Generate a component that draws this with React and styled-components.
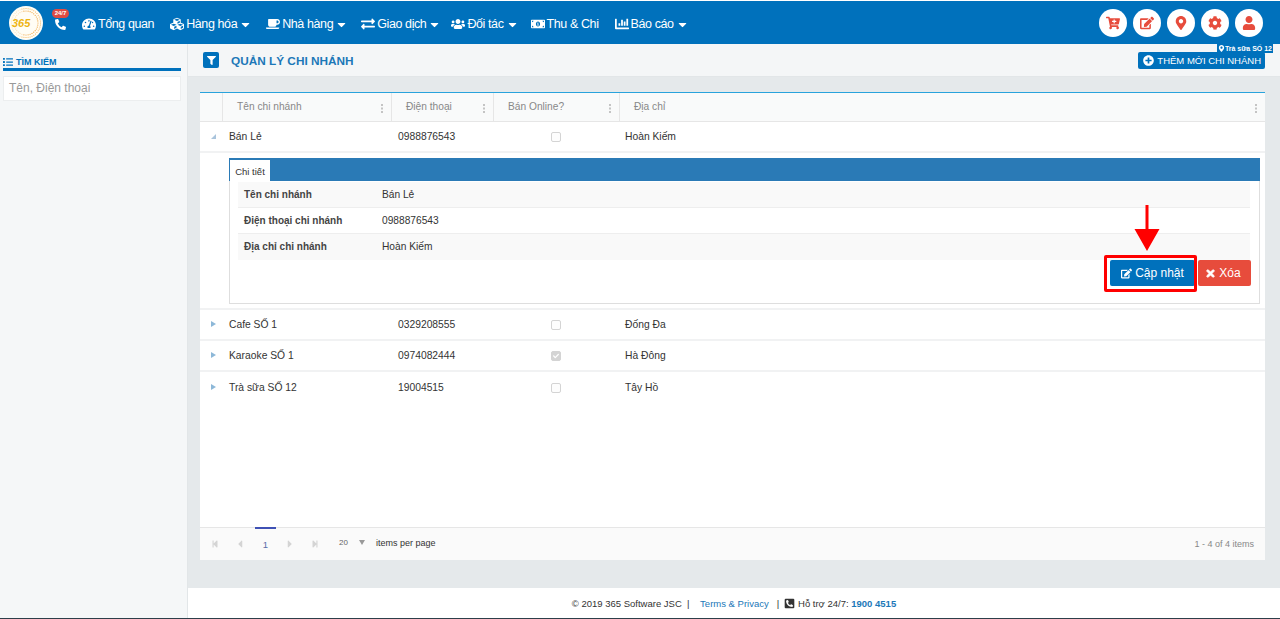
import React from 'react';
import styled, { createGlobalStyle } from 'styled-components';
import {
  FaTachometerAlt, FaCubes, FaCoffee, FaExchangeAlt, FaUsers, FaMoneyBillAlt, FaChartBar,
  FaCaretDown, FaCaretLeft, FaCaretRight, FaStepBackward, FaStepForward, FaPhoneAlt, FaList,
  FaFilter, FaCartPlus, FaEdit, FaMapMarkerAlt, FaCog, FaUser, FaPlusCircle, FaTimes,
  FaPhoneSquareAlt, FaCheck,
} from 'react-icons/fa';

const GlobalStyle = createGlobalStyle`
  html, body { margin: 0; padding: 0; height: 100%; overflow: hidden; }
  body { font-family: "Liberation Sans", Arial, sans-serif; font-size: 11px; color: #333; background: #fff; }
  * { box-sizing: border-box; }
`;

const Page = styled.div`
  width: 1280px;
  height: 619px;
  display: flex;
  flex-direction: column;
  overflow: hidden;
  position: relative;
  border-top: 1px solid #fff;
  border-bottom: 1px solid #2d3f4a;
`;

const Header = styled.header`
  height: 43px;
  flex: none;
  background: #0071bc;
  display: flex;
  align-items: center;
  padding: 0 17px 0 9px;
  position: relative;
`;

const Logo = styled.svg`
  width: 34px;
  height: 34px;
  flex: none;
`;

const PhoneBox = styled.div`
  position: relative;
  width: 32px;
  height: 34px;
  flex: none;
  color: #fff;
  font-size: 11px;
  padding: 13px 0 0 12px;
`;

const Badge = styled.span`
  position: absolute;
  top: 3px;
  left: 9px;
  height: 9px;
  width: 17px;
  border-radius: 5px;
  background: #e04b42;
  color: #fff;
  font-size: 6px;
  line-height: 9px;
  text-align: center;
  font-weight: bold;
`;

const Nav = styled.nav`
  display: flex;
  align-items: center;
  flex: 1;
  padding-top: 3px;
`;

const NavItem = styled.a`
  display: flex;
  align-items: center;
  color: #fff;
  font-size: 12.5px;
  letter-spacing: -0.4px;
  white-space: nowrap;
  margin-left: ${p => p.$gap}px;
  svg { font-size: 14px; margin-right: 2px; }
  svg.caret { font-size: 13px; margin: 0 0 0 2px; }
`;

const RoundIcons = styled.div`
  display: flex;
  gap: 6px;
`;

const RoundIcon = styled.span`
  width: 28px;
  height: 28px;
  border-radius: 50%;
  background: #fff;
  color: #e74c3c;
  font-size: 14px;
  display: flex;
  align-items: center;
  justify-content: center;
`;

const BranchTag = styled.span`
  position: absolute;
  top: 43px;
  right: 7px;
  z-index: 2;
  height: 9px;
  padding: 0 1px;
  background: #0071bc;
  color: #fff;
  font-size: 7px;
  line-height: 9px;
  font-weight: bold;
  white-space: nowrap;
  svg { font-size: 7px; vertical-align: -1px; }
`;

const Body = styled.div`
  flex: 1;
  display: flex;
  min-height: 0;
`;

const Sidebar = styled.aside`
  width: 188px;
  flex: none;
  background: #f5f7f8;
  border-right: 1px solid #e2e6e8;
  padding: 12px 6px 0 3px;
`;

const SideTitle = styled.div`
  color: #0071bc;
  font-size: 9px;
  font-weight: bold;
  height: 12px;
  line-height: 12px;
  svg { font-size: 10px; vertical-align: -1.5px; margin-right: 3px; }
`;

const SideRule = styled.div`
  height: 3px;
  background: #0071bc;
`;

const SearchBox = styled.div`
  margin-top: 5px;
  height: 25px;
  background: #fff;
  border: 1px solid #eceeef;
  color: #999;
  font-size: 12px;
  line-height: 23px;
  padding-left: 5px;
`;

const Main = styled.main`
  flex: 1;
  min-width: 0;
  display: flex;
  flex-direction: column;
  background: #e5e9eb;
`;

const TitleBar = styled.div`
  height: 33px;
  flex: none;
  background: #f4f6f7;
  border-bottom: 1px solid #e2e6e8;
  display: flex;
  align-items: center;
  padding: 0 15px;
  position: relative;
`;

const FilterBtn = styled.span`
  width: 16px;
  height: 16px;
  border-radius: 2px;
  background: #0071bc;
  color: #fff;
  font-size: 9px;
  display: flex;
  align-items: center;
  justify-content: center;
  flex: none;
`;

const PageTitle = styled.h1`
  flex: 1;
  margin: 2px 0 0 12px;
  color: #1c78b8;
  font-size: 11.8px;
  font-weight: bold;
`;

const AddBtn = styled.span`
  height: 17px;
  border-radius: 2px;
  background: #0071bc;
  color: #fff;
  font-size: 9.5px;
  padding: 0 4px 0 5px;
  display: flex;
  align-items: center;
  gap: 3px;
  white-space: nowrap;
  svg { font-size: 11px; }
`;

const Card = styled.section`
  margin: 15px 15px 0 12px;
  height: 468px;
  flex: none;
  background: #fff;
  border-top: 1px solid #29a3dc;
  display: flex;
  flex-direction: column;
`;

const Row = styled.div`
  display: grid;
  grid-template-columns: 22px 169px 102px 126px 1fr;
  align-items: center;
`;

const HeadRow = styled(Row)`
  height: 29px;
  background: #f9fafa;
  border-bottom: 1px solid #e6e6e6;
  align-items: stretch;
`;

const HeadCell = styled.div`
  border-left: ${p => (p.$blank ? '0' : '1px solid #e6e6e6')};
  color: #888;
  font-size: 10.2px;
  line-height: 27px;
  padding-left: 14px;
  position: relative;
`;

const Dots = styled.span`
  position: absolute;
  right: 8px;
  top: 11px;
  width: 2px;
  height: 2px;
  background: #c4c4c4;
  box-shadow: 0 3.5px 0 #c4c4c4, 0 7px 0 #c4c4c4;
`;

const DataRow = styled(Row)`
  height: 31px;
  flex: none;
  padding-bottom: 1px;
  border-bottom: ${p => (p.$end ? '0' : '2px solid #f1f2f3')};
  font-size: 10.3px;
  color: #333;
`;

const Arrow = styled.span`
  justify-self: center;
  margin-left: 4px;
  width: 0;
  height: 0;
  ${p => (p.$open
    ? `border-bottom: 5px solid #a9c4dc; border-left: 5px solid transparent;`
    : `border-left: 5px solid #8db8d8; border-top: 3px solid transparent; border-bottom: 3px solid transparent;`)}
`;

const Cell = styled.div`
  padding-left: ${p => p.$pad ?? 7}px;
`;

const Check = styled.span`
  display: flex;
  align-items: center;
  justify-content: center;
  margin: 1px 0 0 58px;
  width: 10px;
  height: 10px;
  border: 1px solid #d4d4d4;
  border-radius: 2px;
  background: ${p => (p.$on ? '#d4d4d4' : '#fdfdfd')};
  color: #fff;
  font-size: 6px;
`;

const Detail = styled.div`
  height: 157px;
  flex: none;
  padding: 5px 5px 0 29px;
  border-bottom: 2px solid #f1f2f3;
`;

const TabStrip = styled.div`
  height: 23px;
  background: #2a7ab6;
  border-top: 1px solid #2a7ab6;
  padding-left: 1px;
  display: flex;
  align-items: flex-end;
`;

const Tab = styled.span`
  width: 40px;
  height: 21px;
  background: #fff;
  color: #333;
  font-size: 9.5px;
  line-height: 23px;
  text-align: center;
`;

const DetailBody = styled.div`
  height: 123px;
  border: 1px solid #dedede;
  border-top: 0;
  padding: 1px 9px 0 8px;
`;

const InfoRow = styled.div`
  height: 26px;
  display: grid;
  grid-template-columns: 138px 1fr;
  align-items: center;
  padding: 0 0 1px 6px;
  font-size: 10.2px;
  background: ${p => (p.$shade ? '#f9f9f9' : '#fff')};
  border-bottom: 1px solid ${p => (p.$last ? 'transparent' : '#eee')};
`;

const InfoLabel = styled.b`
  font-weight: bold;
  font-size: 10px;
  color: #444;
`;

const Actions = styled.div`
  display: flex;
  justify-content: flex-end;
  gap: 3px;
  margin-right: -1px;
`;

const ActionBtn = styled.span`
  height: 26px;
  width: ${p => p.$w}px;
  padding-right: ${p => p.$shift || 0}px;
  border-radius: 2px;
  background: ${p => p.$bg};
  color: #fff;
  font-size: 12px;
  display: flex;
  align-items: center;
  justify-content: center;
  gap: 3px;
  position: relative;
  svg { font-size: 11px; }
  svg.thick { stroke: currentColor; stroke-width: 40; }
`;

const RedFrame = styled.span`
  position: absolute;
  left: -6px;
  right: -2px;
  top: -5px;
  bottom: -6px;
  border: 3px solid #f00;
  border-radius: 2px;
`;

const RedArrow = styled.svg`
  position: absolute;
  left: 24px;
  top: -55px;
  width: 26px;
  height: 46px;
`;

const Spacer = styled.div`
  flex: 1;
`;

const Pager = styled.div`
  height: 33px;
  flex: none;
  background: #fafafa;
  border-top: 1px solid #e6e6e6;
  display: flex;
  align-items: center;
  position: relative;
  padding: 0 11px 0 0;
  color: #333;
  font-size: 9px;
`;

const PageCell = styled.span`
  width: ${p => p.$w}px;
  flex: none;
  display: flex;
  justify-content: center;
  color: #d4d4d4;
  font-size: ${p => p.$size || 8}px;
`;

const CurrentPage = styled.span`
  width: 21px;
  margin: -1px 0 0 5px;
  flex: none;
  height: 33px;
  border-top: 2px solid #3f51b5;
  color: #5a6fa8;
  font-size: 9.5px;
  text-align: center;
  line-height: 31px;
`;

const PageSize = styled.span`
  margin: -3px 0 0 13px;
  color: #666;
  font-size: 8px;
`;

const SizeCaret = styled.span`
  margin: -4px 0 0 11px;
  width: 0;
  height: 0;
  border-top: 5px solid #999;
  border-left: 3.5px solid transparent;
  border-right: 3.5px solid transparent;
`;

const PerPage = styled.span`
  margin: -2px 0 0 11px;
  flex: 1;
`;

const Total = styled.span`
  color: #888;
`;

const Footer = styled.footer`
  height: 30px;
  flex: none;
  margin-top: 28px;
  background: #fff;
  display: flex;
  align-items: center;
  justify-content: center;
  font-size: 9.5px;
  color: #333;
  white-space: pre;
  svg { font-size: 11px; vertical-align: -1px; }
`;

const FootLink = styled.span`
  color: #1c78b8;
  font-weight: ${p => (p.$bold ? 'bold' : 'normal')};
`;

const navItems = [
  { icon: FaTachometerAlt, label: 'Tổng quan', gap: 7 },
  { icon: FaCubes, label: 'Hàng hóa', gap: 16, caret: true },
  { icon: FaCoffee, label: 'Nhà hàng', gap: 14, caret: true },
  { icon: FaExchangeAlt, label: 'Giao dịch', gap: 13, caret: true },
  { icon: FaUsers, label: 'Đối tác', gap: 10, caret: true },
  { icon: FaMoneyBillAlt, label: 'Thu & Chi', gap: 12 },
  { icon: FaChartBar, label: 'Báo cáo', gap: 16, caret: true },
];

const branches = [
  { name: 'Cafe SỐ 1', phone: '0329208555', on: false, address: 'Đống Đa' },
  { name: 'Karaoke SỐ 1', phone: '0974082444', on: true, address: 'Hà Đông' },
  { name: 'Trà sữa SỐ 12', phone: '19004515', on: false, address: 'Tây Hồ', end: true },
];

const columns = ['Tên chi nhánh', 'Điện thoại', 'Bán Online?', 'Địa chỉ'];

const dotRing = (count, radius, size) => Array.from({ length: count }).map((_, i) => {
  const a = (i / count) * Math.PI * 2;
  return (
    <circle
      key={`${radius}-${i}`}
      cx={17 + Math.cos(a) * radius}
      cy={17 + Math.sin(a) * radius}
      r={size}
      opacity={Math.cos(a) > -0.3 ? 1 : 0.35}
    />
  );
});

const LogoMark = () => (
  <Logo viewBox="0 0 34 34">
    <circle cx="17" cy="17" r="17" fill="#fffdf5" />
    <g fill="#f0a33c">
      {dotRing(44, 14.5, 0.5)}
      {dotRing(36, 12, 0.6)}
    </g>
    <text x="3" y="21" fontSize="11" fontWeight="bold" fontStyle="italic" fill="#eeb411" fontFamily="Liberation Sans">365</text>
  </Logo>
);

const BranchRow = ({ name, phone, on, address, end }) => (
  <DataRow $end={end}>
    <Arrow />
    <Cell>{name}</Cell>
    <Cell>{phone}</Cell>
    <Check $on={on}>{on && <FaCheck />}</Check>
    <Cell $pad={6}>{address}</Cell>
  </DataRow>
);

export default function App() {
  return (
    <Page>
      <GlobalStyle />
      <Header>
        <LogoMark />
        <PhoneBox>
          <FaPhoneAlt />
          <Badge>24/7</Badge>
        </PhoneBox>
        <Nav>
          {navItems.map(({ icon: Icon, label, gap, caret }) => (
            <NavItem key={label} $gap={gap}>
              <Icon />
              {label}
              {caret && <FaCaretDown className="caret" />}
            </NavItem>
          ))}
        </Nav>
        <RoundIcons>
          <RoundIcon><FaCartPlus /></RoundIcon>
          <RoundIcon><FaEdit /></RoundIcon>
          <RoundIcon><FaMapMarkerAlt /></RoundIcon>
          <RoundIcon><FaCog /></RoundIcon>
          <RoundIcon><FaUser /></RoundIcon>
        </RoundIcons>
        <BranchTag><FaMapMarkerAlt />Trà sữa SỐ 12</BranchTag>
      </Header>
      <Body>
        <Sidebar>
          <SideTitle><FaList />TÌM KIẾM</SideTitle>
          <SideRule />
          <SearchBox>Tên, Điện thoại</SearchBox>
        </Sidebar>
        <Main>
          <TitleBar>
            <FilterBtn><FaFilter /></FilterBtn>
            <PageTitle>QUẢN LÝ CHI NHÁNH</PageTitle>
            <AddBtn><FaPlusCircle />THÊM MỚI CHI NHÁNH</AddBtn>
          </TitleBar>
          <Card>
            <HeadRow>
              <HeadCell $blank />
              {columns.map(c => (
                <HeadCell key={c}>{c}<Dots /></HeadCell>
              ))}
            </HeadRow>
            <DataRow>
              <Arrow $open />
              <Cell>Bán Lẻ</Cell>
              <Cell>0988876543</Cell>
              <Check />
              <Cell $pad={6}>Hoàn Kiếm</Cell>
            </DataRow>
            <Detail>
              <TabStrip><Tab>Chi tiết</Tab></TabStrip>
              <DetailBody>
                <InfoRow $shade><InfoLabel>Tên chi nhánh</InfoLabel><span>Bán Lẻ</span></InfoRow>
                <InfoRow><InfoLabel>Điện thoại chi nhánh</InfoLabel><span>0988876543</span></InfoRow>
                <InfoRow $shade $last><InfoLabel>Địa chỉ chi nhánh</InfoLabel><span>Hoàn Kiếm</span></InfoRow>
                <Actions>
                  <ActionBtn $w={85} $bg="#0071bc">
                    <FaEdit />Cập nhật
                    <RedFrame />
                    <RedArrow viewBox="0 0 26 46">
                      <path d="M11.5 0h3v24h11L13 46 .5 24h11z" fill="#f00" />
                    </RedArrow>
                  </ActionBtn>
                  <ActionBtn $w={53} $shift={3} $bg="#e74c3c"><FaTimes className="thick" />Xóa</ActionBtn>
                </Actions>
              </DetailBody>
            </Detail>
            {branches.map(b => <BranchRow key={b.name} {...b} />)}
            <Spacer />
            <Pager>
              <PageCell $w={30}><FaStepBackward /></PageCell>
              <PageCell $w={20} $size={12}><FaCaretLeft /></PageCell>
              <CurrentPage>1</CurrentPage>
              <PageCell $w={28} $size={12}><FaCaretRight /></PageCell>
              <PageCell $w={22}><FaStepForward /></PageCell>
              <PageSize>20</PageSize>
              <SizeCaret />
              <PerPage>items per page</PerPage>
              <Total>1 - 4 of 4 items</Total>
            </Pager>
          </Card>
          <Footer>
            © 2019 365 Software JSC  |    <FootLink>Terms &amp; Privacy</FootLink>   |  <FaPhoneSquareAlt /> Hỗ trợ 24/7: <FootLink $bold>1900 4515</FootLink>
          </Footer>
        </Main>
      </Body>
    </Page>
  );
}
